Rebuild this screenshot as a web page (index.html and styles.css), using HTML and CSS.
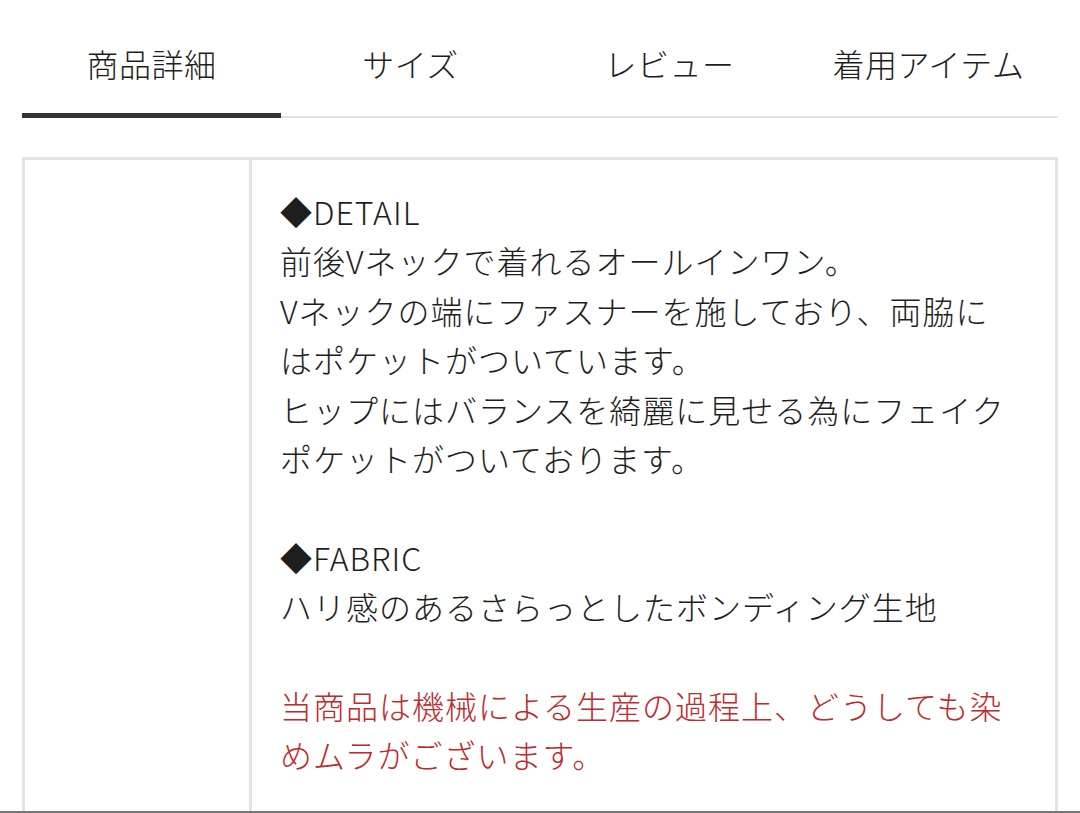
FILE: index.html
```html
<!DOCTYPE html>
<html>
<head>
 <meta charset="utf-8">
 <title>商品詳細</title>
 <link rel="stylesheet" href="styles.css">
</head>
<body>
  <div class="page">
	<ul class="tabs">
		<li class="tab active">商品詳細</li>
		<li class="tab">サイズ</li>
		<li class="tab">レビュー</li>
		<li class="tab">着用アイテム</li>
	</ul>
	<table class="detail">
		<tr>
			<th class="detail-head"></th>
			<td class="detail-body">
				<p>◆DETAIL<br>前後Vネックで着れるオールインワン。<br>Vネックの端にファスナーを施しており、両脇にはポケットがついています。<br>ヒップにはバランスを綺麗に見せる為にフェイクポケットがついております。</p>
				<p>◆FABRIC<br>ハリ感のあるさらっとしたボンディング生地</p>
				<p class="note">当商品は機械による生産の過程上、どうしても染めムラがございます。</p>
				<p>&nbsp;</p>
			</td>
		</tr>
	</table>
  </div>
  <div class="bottom-line"></div>
</body>
</html>
```

FILE: styles.css
```css
  html,body{margin:0;padding:0;background:#fff;}
  body{font-family:"Noto Sans CJK JP","Noto Sans",sans-serif;font-weight:300;color:#1e1e1e;overflow:hidden;height:813px;}
  .page{padding:0 22px;}

  .tabs{list-style:none;margin:0;padding:0;display:grid;grid-template-columns:repeat(4,1fr);border-bottom:2px solid #e2e2e2;}
  .tab{text-align:center;font-size:32px;line-height:44px;padding:41px 0 28px;margin-bottom:-2px;border-bottom:5px solid transparent;letter-spacing:0.5px;}
  .tab.active{border-bottom-color:#333;}

  .detail{width:100%;border-collapse:collapse;margin-top:39px;}
  .detail-head{width:222px;border:3px solid #e4e4e4;border-bottom:0;}
  .detail-body{border:3px solid #e4e4e4;border-bottom:0;padding:27px 45px 0 28px;font-size:32px;line-height:49.4px;letter-spacing:1px;vertical-align:top;}
  .detail-body p{margin:0 0 49.4px;}
  .detail-body .note{color:#be2a2d;}

  .bottom-line{position:fixed;left:0;bottom:0;width:100%;height:2px;background:#777;}
```
